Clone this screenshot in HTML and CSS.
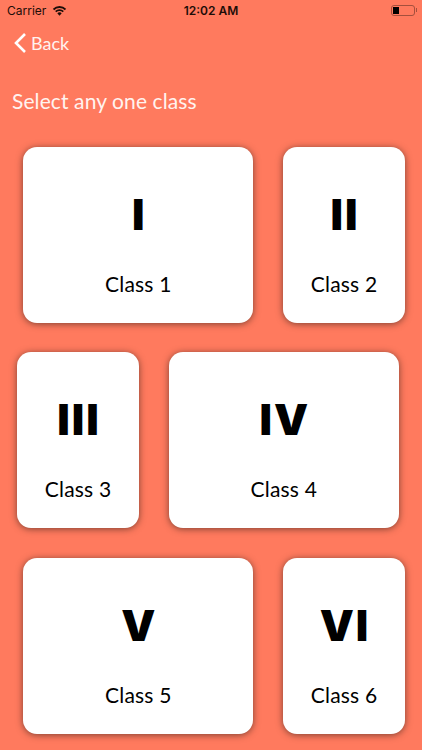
FILE: index.html
```html
<!DOCTYPE html>
<html lang="en">
<head>
<meta charset="utf-8">
<title>Select class</title>
<link rel="stylesheet" href="styles.css">
</head>
<body>
<div class="screen">
  <div class="status">
    <div class="status-left">
      <span>Carrier</span>
      <svg class="wifi" viewBox="0 0 16 12" aria-hidden="true"><path d="M8 11.6 5.6 9.1a3.4 3.4 0 0 1 4.8 0Z"/><path d="M4.5 8 3.2 6.6a6.8 6.8 0 0 1 9.6 0L11.5 8a5 5 0 0 0-7 0Z"/><path d="M2.1 5.6.8 4.2a10.2 10.2 0 0 1 14.4 0l-1.3 1.4a8.4 8.4 0 0 0-11.8 0Z"/></svg>
    </div>
    <div class="status-time">12:02 AM</div>
    <div class="status-right">
      <div class="battery"><div class="battery-fill"></div></div>
      <div class="battery-cap"></div>
    </div>
  </div>
  <div class="nav">
    <svg class="chev" viewBox="0 0 14 22" aria-hidden="true"><path d="M12 2 3 11l9 9"/></svg>
    <span>Back</span>
  </div>
  <h1 class="title">Select any one class</h1>
  <div class="grid">
    <div class="row row-a">
      <div class="card wide"><div class="num">I</div><div class="label">Class 1</div></div>
      <div class="card narrow"><div class="num">II</div><div class="label">Class 2</div></div>
    </div>
    <div class="row row-b">
      <div class="card narrow"><div class="num">III</div><div class="label">Class 3</div></div>
      <div class="card wide"><div class="num">IV</div><div class="label">Class 4</div></div>
    </div>
    <div class="row row-a">
      <div class="card wide"><div class="num">V</div><div class="label">Class 5</div></div>
      <div class="card narrow"><div class="num">VI</div><div class="label">Class 6</div></div>
    </div>
  </div>
</div>
</body>
</html>
```
FILE: styles.css
```css
* { box-sizing: border-box; }
html, body { margin: 0; padding: 0; }
body { width: 422px; height: 750px; overflow: hidden; background: #ff7a5e; font-family: "Lato", "Liberation Sans", sans-serif; }
.screen { width: 422px; height: 750px; display: flex; flex-direction: column; }
.status { height: 20px; padding: 0 5px 0 7px; display: flex; align-items: center; position: relative; color: #1d0d08; font-family: "Inter", "Liberation Sans", sans-serif; font-size: 12px; }
.status-left { display: flex; align-items: center; gap: 6px; }
.wifi { width: 15px; height: 11px; fill: #1d0d08; }
.status-time { position: absolute; left: 0; right: 0; text-align: center; font-weight: 600; }
.status-right { margin-left: auto; display: flex; align-items: center; gap: 1px; }
.battery { width: 24px; height: 11px; border: 1px solid #a5503d; border-radius: 3px; padding: 1px; }
.battery-fill { width: 6px; height: 100%; background: #000; }
.battery-cap { width: 1.5px; height: 4px; background: #a5503d; }
.nav { height: 44px; margin-top: 1px; padding-left: 13px; display: flex; align-items: center; gap: 4px; color: #fff3ef; font-size: 18px; }
.chev { width: 14px; height: 22px; fill: none; stroke: #fff; stroke-width: 2.6; }
.title { margin: 22px 0 0; padding-left: 12px; height: 28px; line-height: 28px; color: #fff3ef; font-size: 21px; font-weight: 400; letter-spacing: .1px; }
.grid { margin-top: 32px; display: flex; flex-direction: column; gap: 29.3px; }
.row { display: flex; height: 176px; }
.row-a { padding-left: 23.3px; gap: 30px; }
.row-b { padding-left: 17.3px; gap: 30px; }
.card { height: 176px; background: #fff; border-radius: 14px; box-shadow: 0 1px 7px rgba(70, 40, 30, .7); display: flex; flex-direction: column; align-items: center; }
.wide { width: 230px; }
.narrow { width: 121.5px; }
.num { margin-top: 41px; height: 52px; padding-left: 2px; line-height: 52px; font-family: "Inter", "Liberation Sans", sans-serif; font-size: 43px; font-weight: 900; letter-spacing: 2px; color: #000; }
.label { margin-top: 30px; height: 28px; line-height: 28px; font-size: 21px; color: #000; letter-spacing: .2px; }
```
